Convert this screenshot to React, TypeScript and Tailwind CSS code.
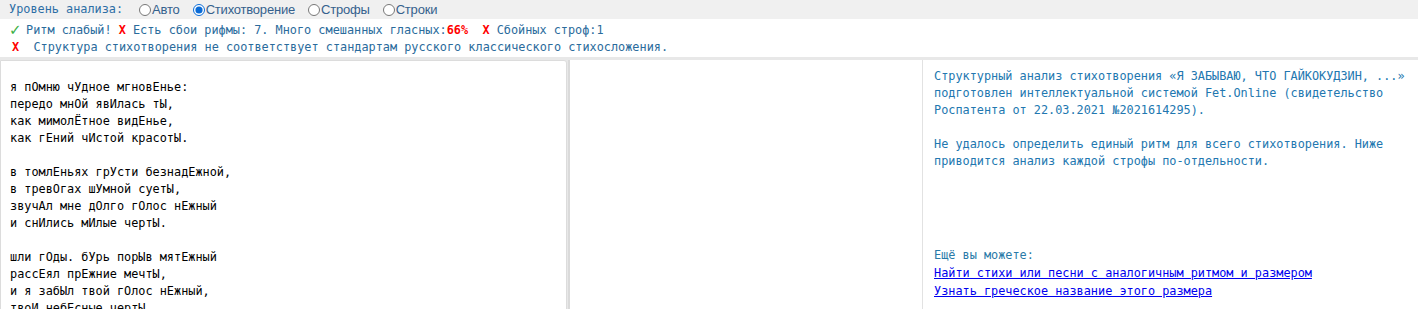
const mono = "font-['DejaVu_Sans_Mono',monospace] text-[11.85px] leading-[17px]";

// Placeholder poem (public-domain Pushkin, stress marks as capitals).
const stanzas = [
  [
    'я пОмню чУдное мгновЕнье:',
    'передо мнОй явИлась тЫ,',
    'как мимолЁтное видЕнье,',
    'как гЕний чИстой красотЫ.',
  ],
  [
    'в томлЕньях грУсти безнадЕжной,',
    'в тревОгах шУмной суетЫ,',
    'звучАл мне дОлго гОлос нЕжный',
    'и снИлись мИлые чертЫ.',
  ],
  [
    'шли гОды. бУрь порЫв мятЕжный',
    'рассЕял прЕжние мечтЫ,',
    'и я забЫл твой гОлос нЕжный,',
    'твоИ небЕсные чертЫ.',
  ],
  [
    'в глушИ, во мрАке заточЕнья',
    'тянУлись тИхо дни моИ',
    'без божествА, без вдохновЕнья,',
    'без слЁз, без жИзни, без любвИ.',
  ],
];

const levels = [
  { label: 'Авто', checked: false },
  { label: 'Стихотворение', checked: true },
  { label: 'Строфы', checked: false },
  { label: 'Строки', checked: false },
];

export default function App() {
  return (
    <div className="w-[1418px] h-[309px] overflow-hidden bg-white">
      <div className="h-[19px] bg-[#f0f0f0] flex items-center pl-[9px]">
        <span className={`${mono} text-[#2d6ea5]`}>Уровень анализа:</span>
        <div className="flex items-center gap-[13px] ml-[16px]">
          {levels.map((level) => (
            <label
              key={level.label}
              className="flex items-center font-['Liberation_Sans',Arial,sans-serif] text-[13px] leading-[17px] tracking-[-0.2px] text-[#35618d]"
            >
              <input
                type="radio"
                name="level"
                readOnly
                defaultChecked={level.checked}
                className="w-[12px] h-[12px] m-0 mr-[1px] accent-[#0a6bd6]"
              />
              {level.label}
            </label>
          ))}
        </div>
      </div>

      <div className={`${mono} text-[#2a6b9c] pl-[9px] pt-[3px] pb-[1px] whitespace-pre`}>
        <div className="flex items-center">
          <span className="inline-block w-[17px] text-[#3cb043] font-['DejaVu_Sans',sans-serif] text-[15px] leading-[17px] font-bold">
            ✓
          </span>
          <span>
            Ритм слабый! <span className="text-[#ff0000] font-bold">X</span> Есть сбои рифмы: 7. Много смешанных
            гласных:
            <span className="text-[#ff0000] font-bold">66%</span>
            {'  '}
            <span className="text-[#ff0000] font-bold">X</span> Сбойных строф:1
          </span>
        </div>
        <div>
          <span className="text-[#ff0000] font-bold pl-[3px]">X</span>
          {'  '}Структура стихотворения не соответствует стандартам русского классического стихосложения.
        </div>
      </div>

      <div className="bg-[#e8e8e8] pt-[3px] flex items-stretch h-[400px]">
        <div className="w-[567px] bg-white border border-[#dcdcdc] rounded-tr-[3px] pl-[9px] pt-[18px]">
          <div className={`${mono} text-black`}>
            {stanzas.map((stanza, i) => (
              <div key={`stanza-${i}`} className="mb-[17px]">
                {stanza.map((line, j) => (
                  <div key={`line-${i}-${j}`}>{line}</div>
                ))}
              </div>
            ))}
          </div>
        </div>

        <div className="ml-[1px] w-[355px] bg-white border-l-2 border-[#dadada] border-r border-r-[#e2e2e2]" />

        <div className={`flex-1 bg-white pl-[11px] pr-[8px] pt-[8px] ${mono} text-[#2277b0]`}>
          <p>
            Структурный анализ стихотворения «Я ЗАБЫВАЮ, ЧТО ГАЙКОКУДЗИН, ...» подготовлен интеллектуальной системой
            Fet.Online (свидетельство Роспатента от 22.03.2021 №2021614295).
          </p>
          <p className="mt-[17px]">
            Не удалось определить единый ритм для всего стихотворения. Ниже приводится анализ каждой строфы
            по-отдельности.
          </p>
          <p className="mt-[77px] text-[#2a7aa8]">Ещё вы можете:</p>
          <div className="flex flex-col gap-[1px] mt-[1px]">
            <a href="#" className="text-[#0000ee] underline">
              Найти стихи или песни с аналогичным ритмом и размером
            </a>
            <a href="#" className="text-[#0000ee] underline">
              Узнать греческое название этого размера
            </a>
          </div>
        </div>
      </div>
    </div>
  );
}
